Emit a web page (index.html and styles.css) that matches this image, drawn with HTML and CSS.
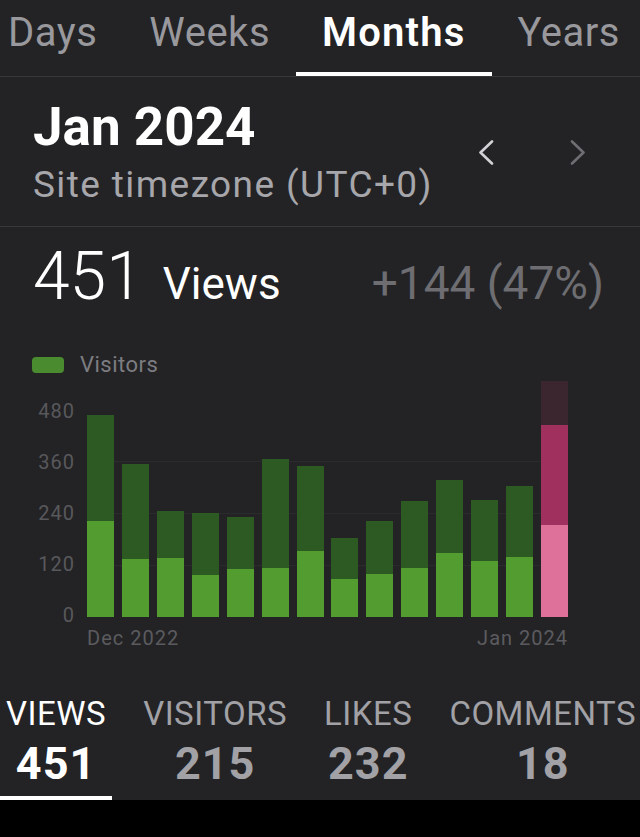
FILE: index.html
```html
<!DOCTYPE html>
<html lang="en">
<head>
  <meta charset="UTF-8">
  <meta name="viewport" content="width=device-width, initial-scale=1.0">
  <title>Stats</title>
  <link rel="stylesheet" href="styles.css">
</head>
<body>

  <div class="app">
    <nav class="tabs">
      <a class="tab tab-first">Days</a>
      <a class="tab">Weeks</a>
      <a class="tab tab-active">Months</a>
      <a class="tab">Years</a>
    </nav>

    <section class="period">
      <div class="period-text">
        <h1>Jan 2024</h1>
        <p>Site timezone (UTC+0)</p>
      </div>
      <div class="period-nav">
        <button class="nav-btn">
          <svg width="16" height="25" viewBox="0 0 16 25"><path d="M14 1.5 L2.5 12.5 L14 23.5" /></svg>
        </button>
        <button class="nav-btn nav-btn-disabled">
          <svg width="16" height="25" viewBox="0 0 16 25"><path d="M2 1.5 L13.5 12.5 L2 23.5" /></svg>
        </button>
      </div>
    </section>

    <section class="summary">
      <div class="total">
        <span class="total-num">451</span>
        <span class="total-label">Views</span>
      </div>
      <div class="change">+144 (47%)</div>
    </section>

    <section class="chart">
      <div class="legend"><span class="legend-swatch"></span>Visitors</div>

      <div class="chart-body">
        <div class="y-axis">
          <span>480</span>
          <span>360</span>
          <span>240</span>
          <span>120</span>
          <span>0</span>
        </div>
        <div class="plot">
          <div class="bar" style="height: 202px"><div class="bar-visitors" style="height: 96px"></div></div>
          <div class="bar" style="height: 153px"><div class="bar-visitors" style="height: 58px"></div></div>
          <div class="bar" style="height: 106px"><div class="bar-visitors" style="height: 59px"></div></div>
          <div class="bar" style="height: 104px"><div class="bar-visitors" style="height: 42px"></div></div>
          <div class="bar" style="height: 100px"><div class="bar-visitors" style="height: 48px"></div></div>
          <div class="bar" style="height: 158px"><div class="bar-visitors" style="height: 49px"></div></div>
          <div class="bar" style="height: 151px"><div class="bar-visitors" style="height: 66px"></div></div>
          <div class="bar" style="height: 79px"><div class="bar-visitors" style="height: 38px"></div></div>
          <div class="bar" style="height: 96px"><div class="bar-visitors" style="height: 43px"></div></div>
          <div class="bar" style="height: 116px"><div class="bar-visitors" style="height: 49px"></div></div>
          <div class="bar" style="height: 137px"><div class="bar-visitors" style="height: 64px"></div></div>
          <div class="bar" style="height: 117px"><div class="bar-visitors" style="height: 56px"></div></div>
          <div class="bar" style="height: 131px"><div class="bar-visitors" style="height: 60px"></div></div>
          <div class="bar bar-current" style="height: 236px">
            <div class="bar-views" style="height: 100px"></div>
            <div class="bar-visitors" style="height: 92px"></div>
          </div>
        </div>
      </div>

      <div class="x-axis">
        <span>Dec 2022</span>
        <span>Jan 2024</span>
      </div>
    </section>

    <section class="stats">
      <div class="stat stat-active">
        <div class="stat-label">VIEWS</div>
        <div class="stat-value">451</div>
      </div>
      <div class="stat">
        <div class="stat-label">VISITORS</div>
        <div class="stat-value">215</div>
      </div>
      <div class="stat">
        <div class="stat-label">LIKES</div>
        <div class="stat-value">232</div>
      </div>
      <div class="stat">
        <div class="stat-label">COMMENTS</div>
        <div class="stat-value">18</div>
      </div>
    </section>
  </div>

</body>
</html>
```

FILE: styles.css
```css
body {
  font-family: Roboto, 'Liberation Sans', sans-serif;
  margin: 0;
  padding: 0;
  background-color: #000;
  color: #fff;
}

.app {
  background-color: #232325;
  overflow: hidden;
}

/* Period tabs */
.tabs {
  display: flex;
  border-bottom: 1px solid #38383a;
  white-space: nowrap;
}

.tab {
  flex: none;
  padding: 9px 26px 15px;
  font-size: 40px;
  line-height: 48px;
  letter-spacing: 0.5px;
  color: #98989d;
  border-bottom: 4px solid transparent;
}

.tab-first {
  margin-left: -18px;
}

.tab-active {
  color: #fff;
  font-weight: 600;
  letter-spacing: 1.2px;
  border-bottom-color: #fff;
}

/* Current period header */
.period {
  display: flex;
  align-items: center;
  justify-content: space-between;
  padding: 24px 16px 19px 33px;
  border-bottom: 1px solid #38383a;
}

.period h1 {
  margin: 0;
  font-size: 53px;
  line-height: 53px;
  font-weight: 700;
}

.period p {
  margin: 9px 0 0;
  font-size: 37px;
  line-height: 44px;
  letter-spacing: 1.4px;
  color: #a6a6ab;
}

.period-nav {
  display: flex;
  margin-top: -4px;
}

.nav-btn {
  width: 92px;
  height: 40px;
  padding: 0;
  border: none;
  background: none;
  display: flex;
  align-items: center;
  justify-content: center;
}

.nav-btn svg path {
  fill: none;
  stroke: #d1d1d6;
  stroke-width: 2.6;
  stroke-linecap: round;
  stroke-linejoin: round;
}

.nav-btn-disabled svg path {
  stroke: #6e6e73;
}

/* Summary line */
.summary {
  display: flex;
  align-items: baseline;
  justify-content: space-between;
  padding: 17px 36px 0 33px;
}

.total-num {
  font-size: 66px;
  line-height: 66px;
  font-weight: 300;
}

.total-label {
  font-size: 44px;
  margin-left: 16px;
}

.change {
  font-size: 46px;
  color: #6d6d72;
}

/* Chart */
.chart {
  padding: 0 32px;
}

.legend {
  display: flex;
  align-items: center;
  margin-top: 43px;
  font-size: 22px;
  line-height: 24px;
  letter-spacing: 0.5px;
  color: #7c7c81;
}

.legend-swatch {
  width: 32px;
  height: 16px;
  border-radius: 4px;
  background-color: #4a8b2f;
  margin-right: 16px;
}

.chart-body {
  display: flex;
  align-items: flex-start;
  height: 236px;
  margin-top: 4px;
}

.y-axis {
  width: 43px;
  margin-top: 5px;
  display: flex;
  flex-direction: column;
  align-items: flex-end;
  font-size: 20px;
  line-height: 51px;
  letter-spacing: 1px;
  color: #58585c;
}

.plot {
  width: 481px;
  height: 236px;
  margin-left: 12px;
  display: flex;
  align-items: flex-end;
  justify-content: space-between;
  background-image: repeating-linear-gradient(to top, transparent 0 51px, #2b2b2d 51px 52px);
  background-size: 100% 207px;
  background-position: bottom;
  background-repeat: no-repeat;
}

.bar {
  width: 27px;
  display: flex;
  flex-direction: column;
  justify-content: flex-end;
  background-color: #2d5a23;
}

.bar-visitors {
  background-color: #529c30;
}

.bar-current {
  background-color: #3b2630;
}

.bar-current .bar-views {
  background-color: #a0305d;
}

.bar-current .bar-visitors {
  background-color: #de7199;
}

.x-axis {
  display: flex;
  justify-content: space-between;
  width: 481px;
  margin: 9px 0 0 55px;
  font-size: 20px;
  line-height: 24px;
  letter-spacing: 1px;
  color: #5b5b5f;
}

/* Bottom stat tabs */
.stats {
  display: flex;
  gap: 25px;
  padding-top: 44px;
  white-space: nowrap;
}

.stat {
  flex: none;
  padding: 0 6px 7px;
  text-align: center;
  color: #a1a1a6;
  border-bottom: 4px solid transparent;
}

.stat-active {
  color: #fff;
  border-bottom-color: #fff;
}

.stat-label {
  font-size: 33px;
  line-height: 40px;
  letter-spacing: 0.5px;
}

.stat-value {
  margin-top: 5px;
  font-size: 45px;
  line-height: 50px;
  font-weight: 700;
  letter-spacing: 1px;
}
```
